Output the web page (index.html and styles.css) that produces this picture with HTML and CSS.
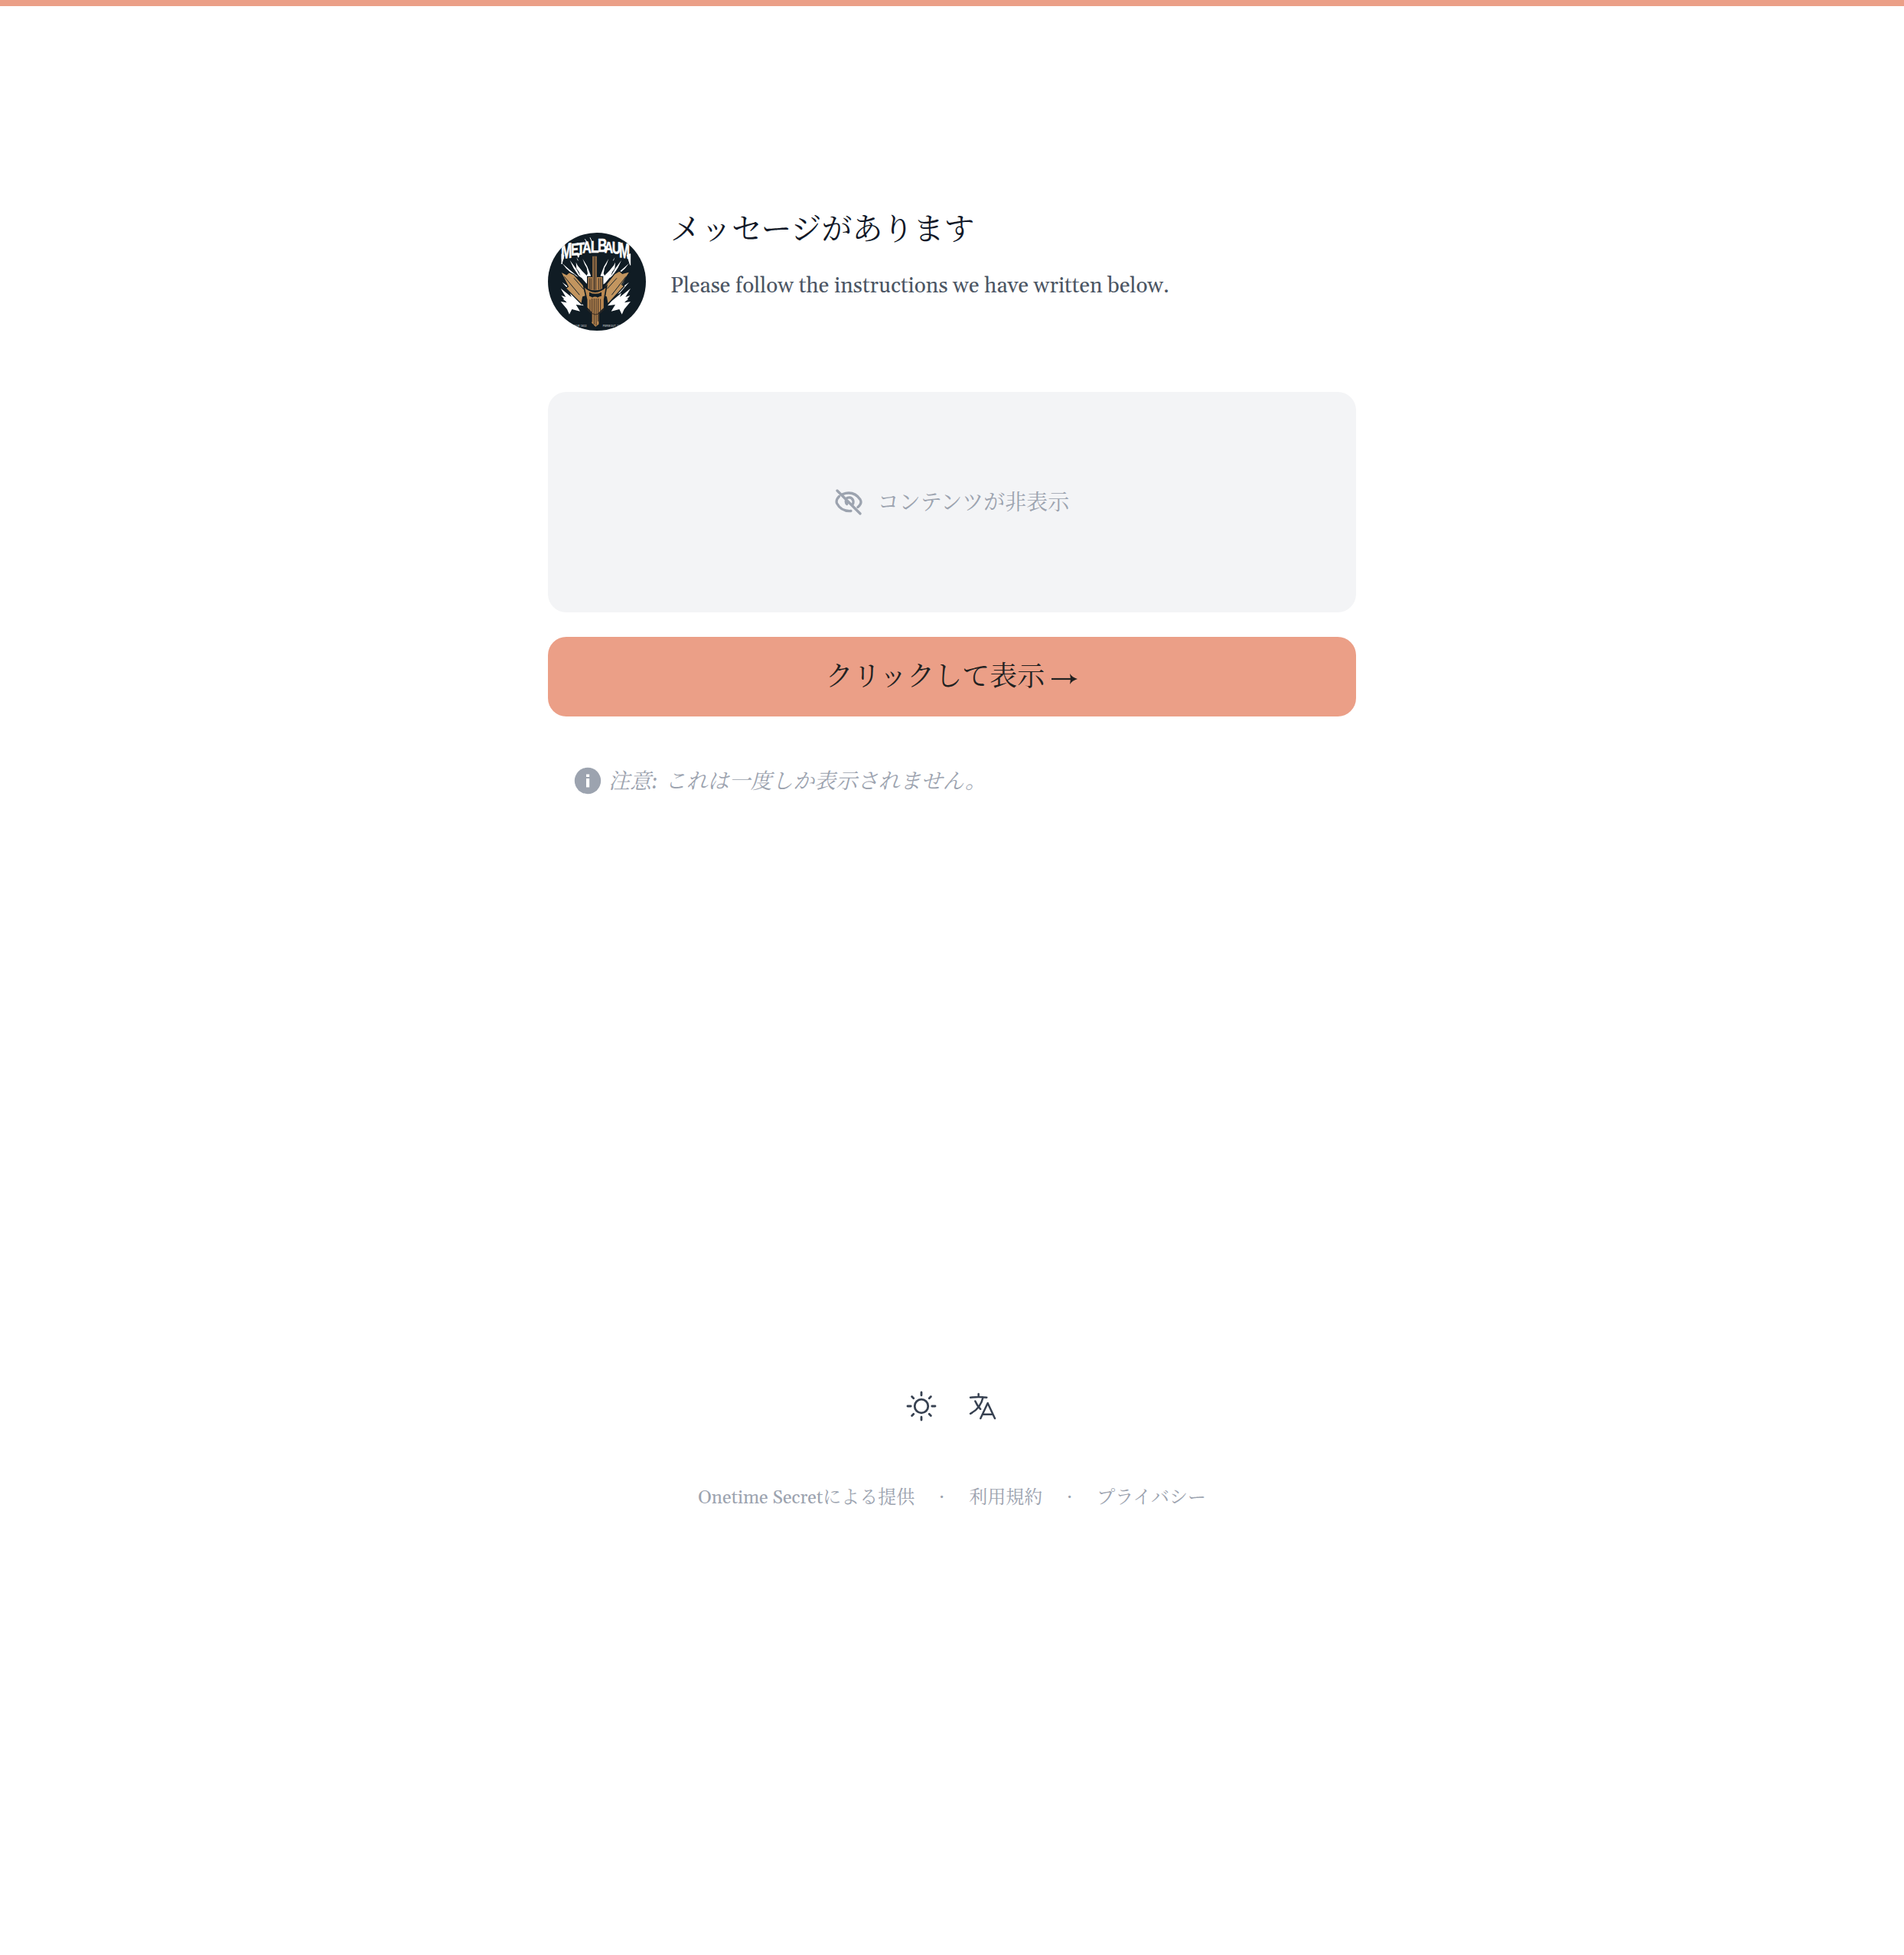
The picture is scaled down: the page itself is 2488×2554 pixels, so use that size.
FILE: index.html
```html
<!DOCTYPE html>
<html lang="ja">
<head>
<meta charset="utf-8">
<title>メッセージがあります</title>
<link rel="stylesheet" href="styles.css">
</head>
<body>
<div class="page">
  <main class="content">
    <header class="intro">
      <svg class="logo" viewBox="48 42 384 384" aria-label="Metalbaum">
        <defs>
          <clipPath id="disc"><circle cx="240" cy="234" r="192"/></clipPath>
          <g id="bolts" fill="#fff">
            <path d="M134 150l24 32 22 38-12-10-20-30zM158 158l6 12 18 22 18 18 4-8-4-22-8-14-8-22 18 30 14 36-2 40-16-10-22-26-6-18-10-14zM104 162l30 26 34 28-20-8-28-26zM98 260l42 34-6-16 38 32 16 18-30-4 16 26-32-8-10 20-9-20-25-30 24 4-22-28 18 6z"/>
            <path d="M104 236l30 22 18 26-12-6zM106 302l22 16-8-14zM160 138l8 14-4-2zM120 228l30 34 8 22-20-22z"/>
          </g>
        </defs>
        <g clip-path="url(#disc)">
          <rect x="48" y="42" width="384" height="384" fill="#101c24"/>
          <use href="#bolts"/>
          <use href="#bolts" transform="translate(470 0) scale(-1 1)"/>
          <path d="M97 194l24 12 10-9 20 10 46 52 4 29-16 6-5 28-62-62 9-7zM370 194l-30 8-12-10-20 12-43 55-4 29 16 6 5 28 65-70-9-7z" fill="#c2955f" stroke="#101c24" stroke-width="4"/>
          <path d="M112 214l60 72M150 220l39 45M354 214l-56 72M318 220l-38 42" stroke="#17232a" stroke-width="3" fill="none"/>
          <path d="M203 214h60v56h-60z" fill="#b5844f" stroke="#101c24" stroke-width="4"/>
          <path d="M222 134h18v132h-18z" fill="#876542"/>
          <path d="M231 136v130M211 220v46M217 220v46M247 220v46M255 220v46" stroke="#352e29" stroke-width="3"/>
          <path d="M188 251q45 44 90 0l-9 53v34l-19 18v46l-15 12-18-18v-42l-17-18v-32z" fill="#b98750" stroke="#101c24" stroke-width="5"/>
          <path d="M210 275q24 13 48 0v15q-10 1-15 6-10-7-21 0-5-5-12-6z" fill="#101c24"/>
          <path d="M213 304v44M221 300v92M229 300v102M237 300v106M245 300v90M254 302v46M202 342q32 42 66 0" stroke="#392d25" stroke-width="3" fill="none"/>
          <g class="wordmark">
            <path d="M102 125v40l9-34zM358 130l13 39v-44zM193 67l12 18M213 61l10 22M161 122l6 17 7-17"/>
            <text transform="translate(99 146) skewY(-9) scale(.62 1)" font-size="84">M</text>
            <text transform="translate(139 131) skewY(-5) scale(.66 1)" font-size="66">E</text>
            <text transform="translate(162 129) skewY(-4) scale(.72 1)" font-size="68">T</text>
            <text transform="translate(183 122) skewY(-3) scale(.76 1)" font-size="64">A</text>
            <text transform="translate(215 119) scale(.78 1)" font-size="68">L</text>
            <text transform="translate(243 116) scale(.74 1)" font-size="70">B</text>
            <text transform="translate(269 120) skewY(3) scale(.76 1)" font-size="62">A</text>
            <text transform="translate(299 122) skewY(5) scale(.72 1)" font-size="66">U</text>
            <text transform="translate(327 138) skewY(9) scale(.6 1)" font-size="84">M</text>
          </g>
          <g class="motto"><text x="151" y="411">FOR 1832</text><text x="263" y="411">PERMOUT 18</text></g>
        </g>
      </svg>
      <div class="intro-text">
        <h1>メッセージがあります</h1>
        <p class="instructions">Please follow the instructions we have written below.</p>
      </div>
    </header>
    <section class="hidden-card">
      <svg class="eye" viewBox="0 0 36 36"><path d="M3 3l30 30M10.5 7.5Q14 6 18 6C26 6 30 10 33 14.5Q35 18 33 21 32 23 30 24.5M5.5 10.5Q1 15 2.5 19.5C7 28 14 30 21 29.5M16 12.5q5.5-2 7.7 3 .8 2.2-.2 5M14.5 15.5q-.8 3 1.2 5"/></svg>
      <span>コンテンツが非表示</span>
    </section>
    <button class="reveal">クリックして表示 <svg class="arrow" viewBox="0 0 36 20"><path d="M1 10h31"/><path class="tip" d="M25 3q3 5 10 7-7 2-10 7l1-7z"/></svg></button>
    <p class="notice">
      <svg class="info" viewBox="0 0 36 36"><circle cx="18" cy="18" r="17.2"/><path d="M16 9.5h4.2v3.6H16zM16 15h4.2v11.5H16z"/></svg>
      <em>注意<span class="colon">:</span>これは一度しか表示されません。</em>
    </p>
  </main>
  <footer class="footer">
    <div class="tools">
      <svg class="tool" viewBox="0 0 24 24"><path d="M12 3v1.9M12 19.1V21M3 12h2.1M18.9 12H21M5.8 5.8l1.1 1.1M17.1 17.1l1.1 1.1M18.2 5.8l-1.1 1.1M6.9 17.1l-1.1 1.1"/><circle cx="12" cy="12" r="4.4"/></svg>
      <svg class="tool" viewBox="-1.5 -1.5 27 27"><path d="M10.5 21l5.25-11.25L21 21m-9-3h7.5M3 5.621a48.474 48.474 0 016-.371m0 0c1.12 0 2.233.038 3.334.114M9 5.25V3m3.334 2.364C11.176 10.658 7.69 15.08 3 17.502m9.334-12.138c.896.061 1.785.147 2.666.257m-4.589 8.495a18.023 18.023 0 01-3.827-5.802"/></svg>
    </div>
    <nav class="links"><a><span class="brand">Onetime Secret</span>による提供</a><span class="dot">·</span><a>利用規約</a><span class="dot">·</span><a>プライバシー</a></nav>
  </footer>
</div>
</body>
</html>
```
FILE: styles.css
```css
* { box-sizing: border-box; }
body {
  margin: 0;
  background: #fff;
  color: #111827;
  font-family: Gelasio, "Liberation Serif", "Noto Serif CJK JP", "Noto Sans CJK JP", serif;
}
h1, p { margin: 0; font-weight: 400; }
svg { display: block; flex: none; }
.page {
  min-height: 2554px;
  border-top: 8px solid #eb9f87;
  padding-top: 264px;
  display: flex;
  flex-direction: column;
  align-items: center;
}
.content { width: 1056px; height: 1527px; }
.intro { display: flex; gap: 32px; height: 240px; }
.logo { width: 128px; height: 128px; margin-top: 32px; }
.wordmark { font-family: "Liberation Sans", sans-serif; font-weight: 700; fill: #fff; stroke: #fff; stroke-width: 1.5; }
.wordmark path { stroke-width: 3; }
.motto { font: 700 9px "Liberation Sans", sans-serif; fill: #aeb3b5; letter-spacing: 1px; }
h1 { padding-top: 2px; font-size: 40px; line-height: 56px; white-space: nowrap; }
.instructions {
  margin-top: 21px;
  font-size: 28px;
  line-height: 46px;
  color: #4b5563;
  white-space: nowrap;
}
.hidden-card {
  height: 288px;
  border-radius: 24px;
  background: #f3f4f6;
  display: flex;
  align-items: center;
  justify-content: center;
  gap: 20px;
  color: #9ca3af;
  font-size: 28px;
}
.hidden-card span { padding-bottom: 2px; }
.eye { width: 36px; height: 36px; fill: none; stroke: #9ca3af; stroke-width: 3.3; stroke-linecap: round; }
.reveal {
  margin-top: 32px;
  width: 100%;
  height: 104px;
  border: 0;
  border-radius: 24px;
  background: #eb9f87;
  color: #222;
  font: 400 36px/56px "Liberation Serif", "Noto Serif CJK JP", "Noto Sans CJK JP", serif;
  display: flex;
  align-items: center;
  justify-content: center;
  gap: 8px;
}
.arrow { width: 36px; height: 20px; margin-top: 5px; fill: none; stroke: #222; stroke-width: 2.2; }
.arrow .tip { fill: #222; stroke: none; }
.notice {
  margin-top: 56px;
  height: 56px;
  padding-left: 34px;
  display: flex;
  align-items: center;
  gap: 9px;
  color: #9ca3af;
  font-size: 28px;
  white-space: nowrap;
}
.notice em { padding-bottom: 2px; letter-spacing: -.1px; }
.info { width: 36px; height: 36px; fill: #9ca3af; }
.info path { fill: #fff; }
.colon { display: inline-block; width: 18px; }
.footer { display: flex; flex-direction: column; align-items: center; }
.tools { display: flex; gap: 32px; padding: 14px 0; }
.tool { width: 48px; height: 48px; fill: none; stroke: #374151; stroke-width: 1.4; stroke-linecap: round; stroke-linejoin: round; }
.links {
  margin-top: 62px;
  display: flex;
  align-items: center;
  font-size: 24px;
  line-height: 40px;
  color: #9ca3af;
  white-space: nowrap;
}
.dot { width: 71px; text-align: center; }
```
